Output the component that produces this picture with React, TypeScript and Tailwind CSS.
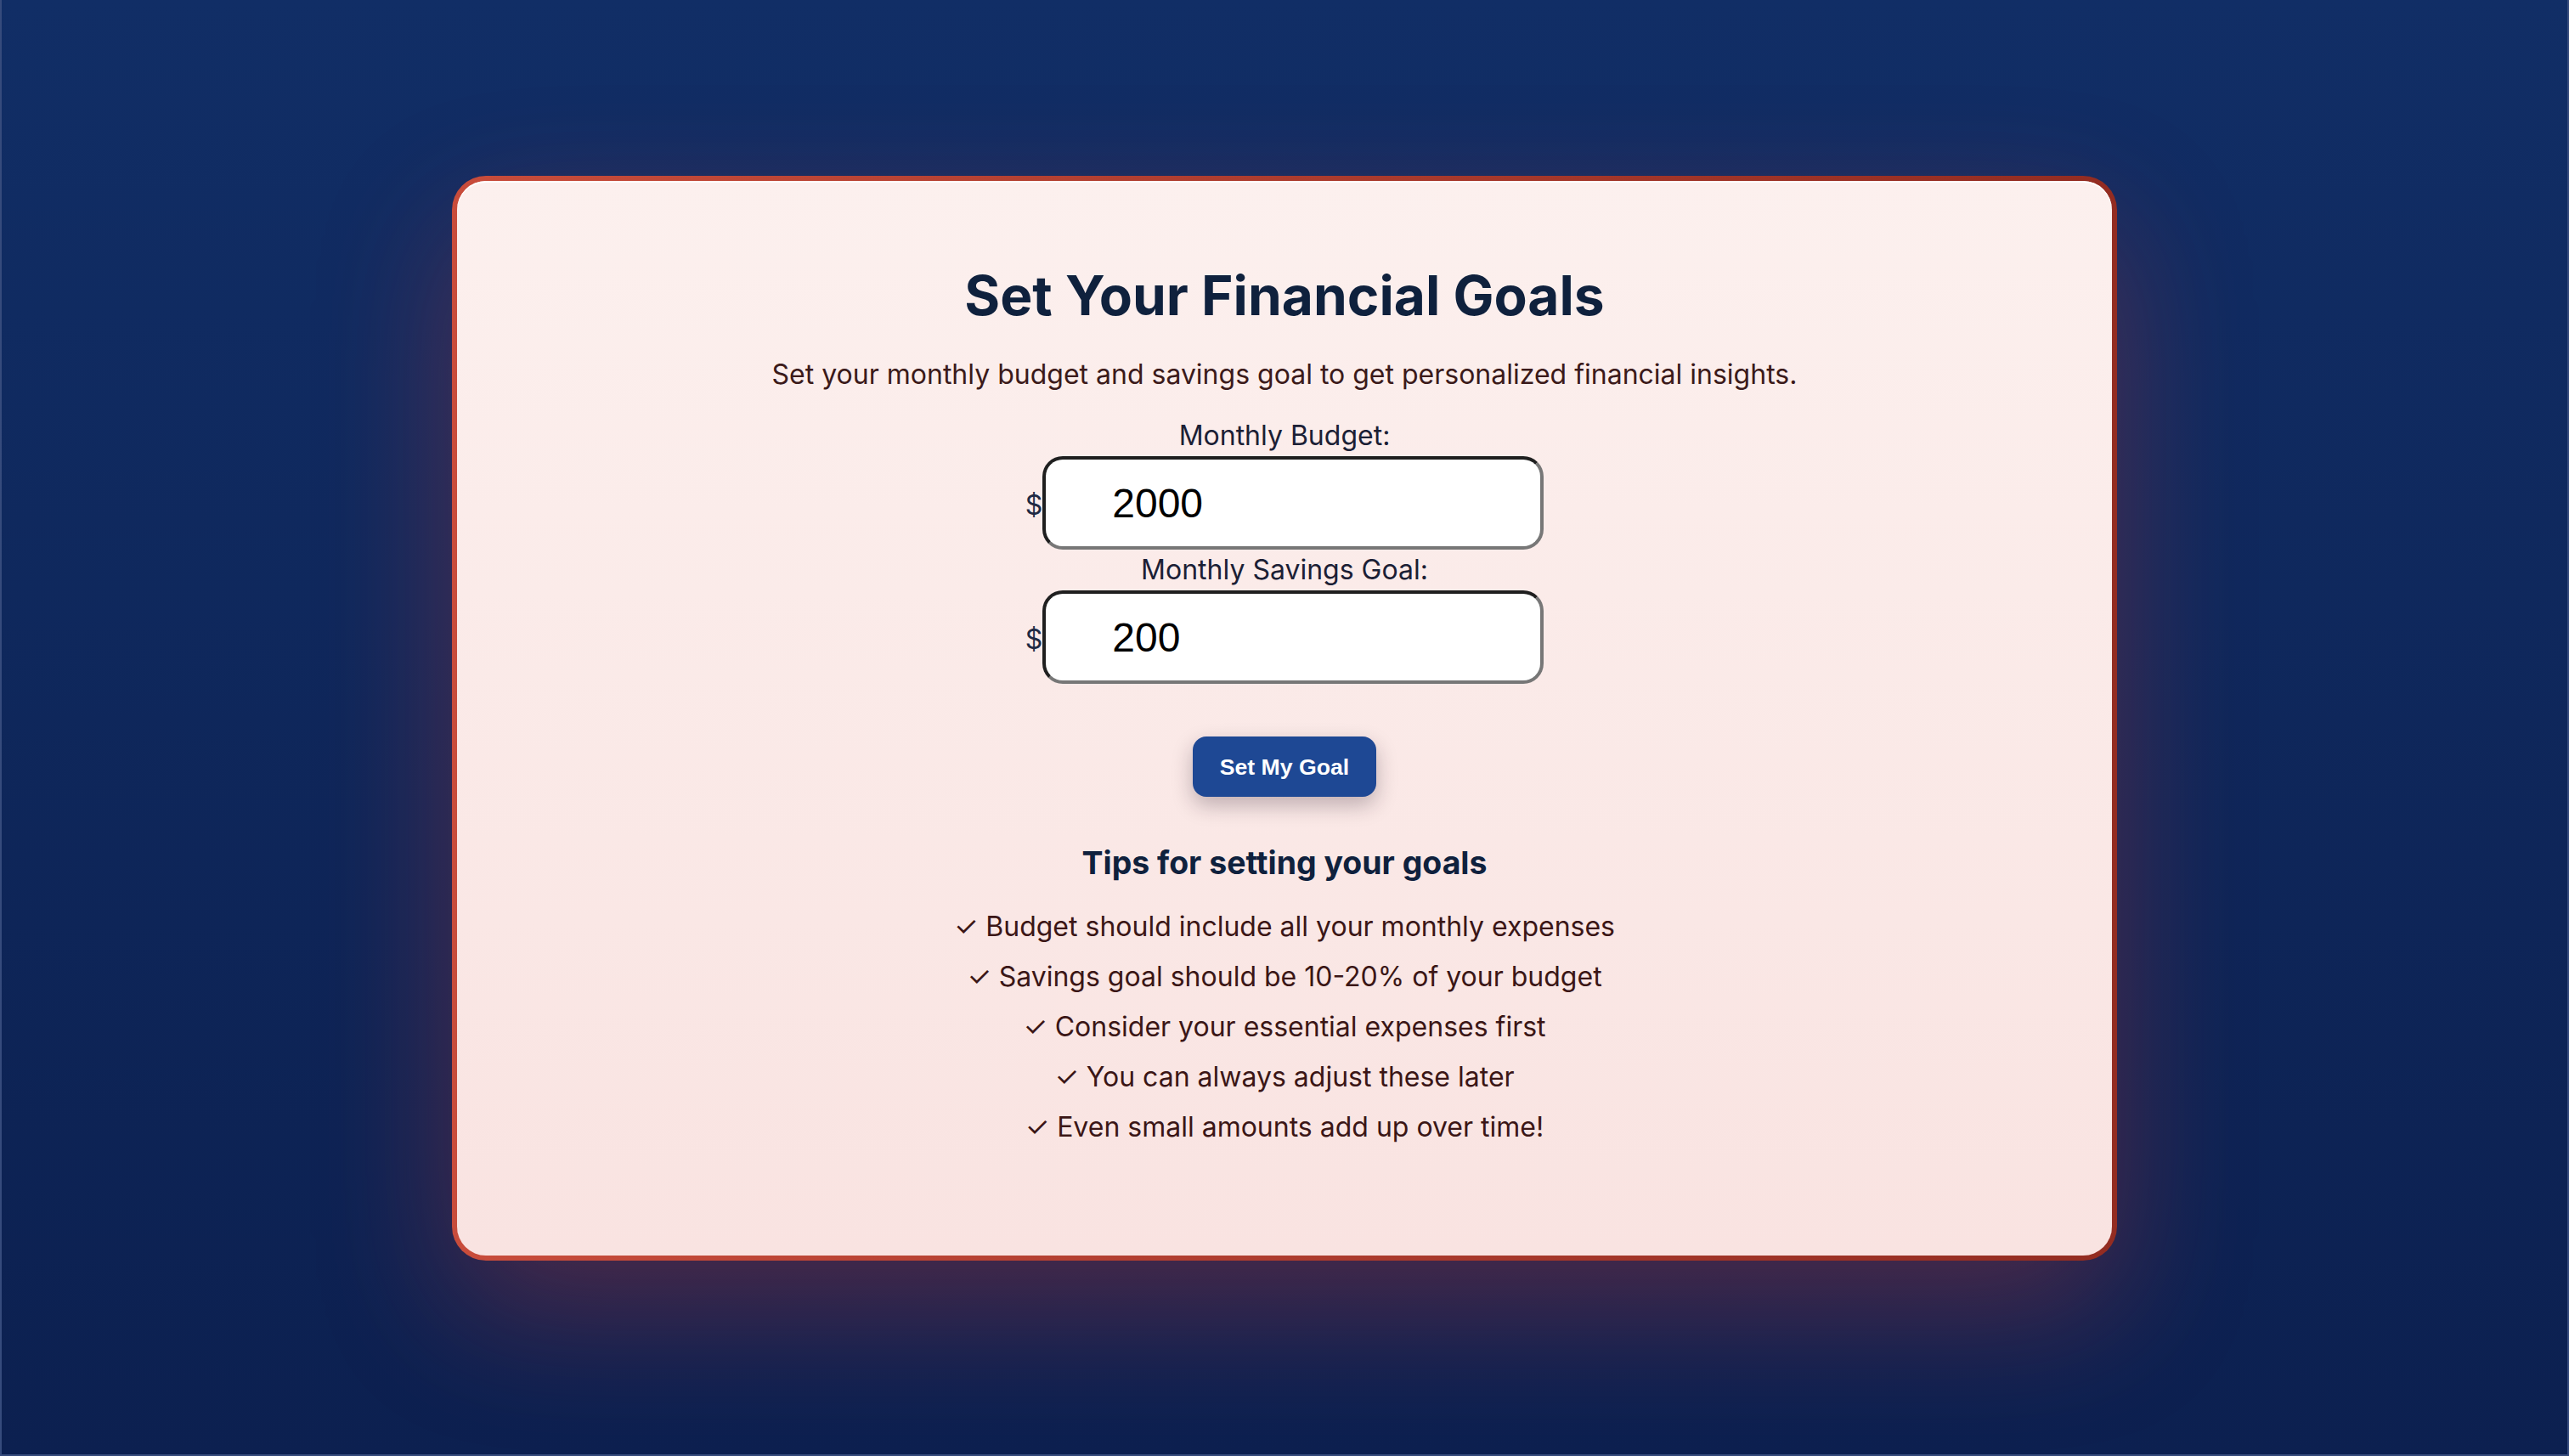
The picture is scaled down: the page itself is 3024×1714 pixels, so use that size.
import { useState } from 'react';

const tips = [
  'Budget should include all your monthly expenses',
  'Savings goal should be 10-20% of your budget',
  'Consider your essential expenses first',
  'You can always adjust these later',
  'Even small amounts add up over time!',
];

function MoneyField({ label, value, onChange }: { label: string; value: string; onChange: (v: string) => void }) {
  return (
    <div className="flex flex-col items-center">
      <label className="text-[32px] leading-[48px] text-[#1b2035]">{label}</label>
      <div className="flex items-center">
        <span className="text-[32px] leading-[48px] text-[#1e2a44] mt-[6px]">$</span>
        <input
          type="number"
          value={value}
          onChange={(e) => onChange(e.target.value)}
          className="w-[590px] h-[110px] rounded-[24px] bg-white pl-[78px] pr-6 text-[48px] text-black outline-none border-4 border-t-[#1f1f1f] border-l-[#1f1f1f] border-b-[#777777] border-r-[#777777] [font-family:'Liberation_Sans',Arial,sans-serif] [appearance:textfield]"
        />
      </div>
    </div>
  );
}

export default function App() {
  const [budget, setBudget] = useState('2000');
  const [savings, setSavings] = useState('200');

  return (
    <div className="min-h-screen bg-gradient-to-b from-[#112e66] to-[#0c2050] border-x-2 border-b-2 border-[#364b7c] flex justify-center pt-[207px] font-['Inter',sans-serif]">
      <div className="w-[1960px] h-[1277px] rounded-[40px] p-[6px] bg-gradient-to-r from-[#c84c3b] to-[#932c21] shadow-[0_60px_160px_rgba(215,60,50,0.32)]">
        <div className="h-full rounded-[34px] bg-gradient-to-b from-[#fcf0ee] to-[#f9e3e1] shadow-[inset_0_2px_0_rgba(255,255,255,0.9)] flex flex-col items-center pt-[97px]">
          <h1 className="text-[64px] leading-[76px] font-bold text-[#0f213d]">Set Your Financial Goals</h1>
          <p className="mt-[31px] text-[32px] leading-[48px] text-[#3b1a1a]">
            Set your monthly budget and savings goal to get personalized financial insights.
          </p>

          <div className="mt-[24px] flex flex-col">
            <MoneyField label="Monthly Budget:" value={budget} onChange={setBudget} />
            <MoneyField label="Monthly Savings Goal:" value={savings} onChange={setSavings} />
          </div>

          <button className="mt-[62px] w-[216px] h-[71px] rounded-[16px] bg-[#1e4894] text-white font-bold text-[26.67px] [font-family:'Liberation_Sans',Arial,sans-serif] shadow-[0_10px_24px_rgba(40,20,40,0.28)]">
            Set My Goal
          </button>

          <h3 className="mt-[50px] text-[37.44px] leading-[56px] font-bold text-[#0f213d]">Tips for setting your goals</h3>
          <ul className="mt-[23px] flex flex-col items-center gap-[11px] text-[32px] leading-[48px] text-[#3b1616]">
            {tips.map((t) => (
              <li key={t}>✓ {t}</li>
            ))}
          </ul>
        </div>
      </div>
    </div>
  );
}
